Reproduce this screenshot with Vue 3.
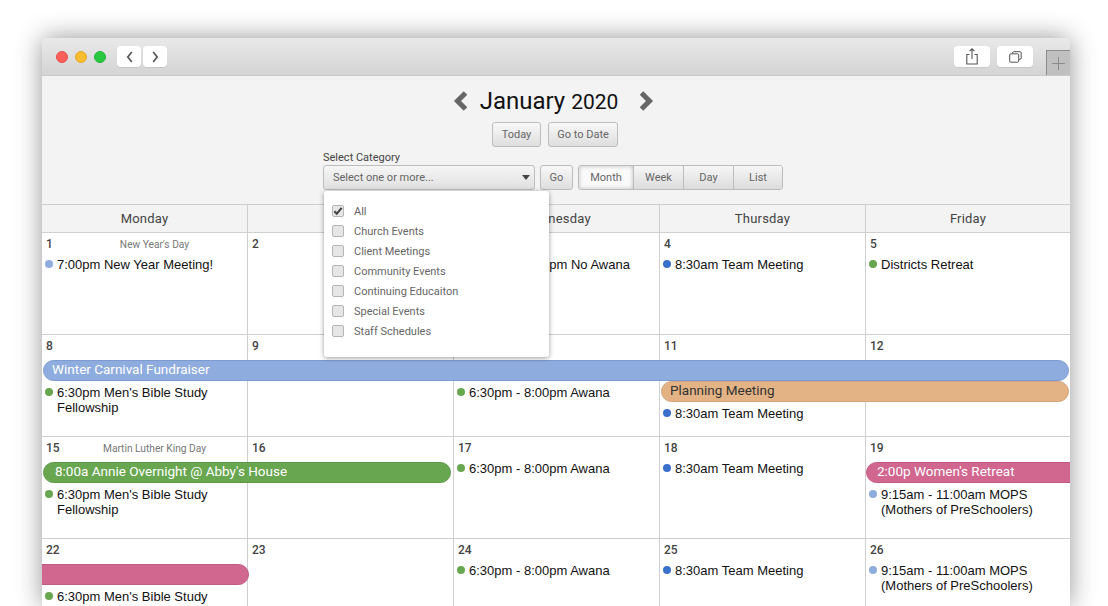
<script setup>
const days = ['Monday', 'Tuesday', 'Wednesday', 'Thursday', 'Friday']
const cats = ['All', 'Church Events', 'Client Meetings', 'Community Events', 'Continuing Educaiton', 'Special Events', 'Staff Schedules']
const views = ['Month', 'Week', 'Day', 'List']
const blue = '#8facde', green = '#68a74f', dark = '#3a6fcb'
const awana = { c: green, t: '6:30pm - 8:00pm Awana' }
const team = { c: dark, t: '8:30am Team Meeting' }
const mens = { c: green, t: '6:30pm Men\'s Bible Study Fellowship' }
const mops = { c: blue, t: '9:15am - 11:00am MOPS (Mothers of PreSchoolers)' }
const weeks = [
  { cls: 'w1', cells: [
    { n: 1, hol: "New Year's Day", ev: [{ c: blue, t: '7:00pm New Year Meeting!' }] },
    { n: 2, ev: [] },
    { n: 3, ev: [{ c: green, t: '6:30pm - 8:00pm No Awana' }] },
    { n: 4, ev: [team] },
    { n: 5, ev: [{ c: green, t: 'Districts Retreat' }] } ] },
  { cls: 'w2', cells: [
    { n: 8, ev: [mens], pad: 'p2' },
    { n: 9, ev: [], pad: 'p2' },
    { n: 10, ev: [awana], pad: 'p2' },
    { n: 11, ev: [team], pad: 'p3' },
    { n: 12, ev: [], pad: 'p2' } ] },
  { cls: 'w3', cells: [
    { n: 15, hol: 'Martin Luther King Day', ev: [mens], pad: 'p2' },
    { n: 16, ev: [], pad: 'p2' },
    { n: 17, ev: [awana] },
    { n: 18, ev: [team] },
    { n: 19, ev: [mops], pad: 'p2' } ] },
  { cls: 'w4', cells: [
    { n: 22, ev: [mens], pad: 'p2' },
    { n: 23, ev: [] },
    { n: 24, ev: [awana] },
    { n: 25, ev: [team] },
    { n: 26, ev: [mops] } ] },
]
const bars = {
  w2: [
    { k: 'b-blue b-wide', t: 'Winter Carnival Fundraiser' },
    { k: 'b-orange b-two', t: 'Planning Meeting' } ],
  w3: [
    { k: 'b-green b-left', t: '8:00a Annie Overnight @ Abby\'s House' },
    { k: 'b-pink b-fri', t: '2:00p Women\'s Retreat' } ],
  w4: [ { k: 'b-pink b-cont', t: '' } ],
}
</script>

<template>
  <div class="window">
    <header class="titlebar">
      <span class="light red"></span>
      <span class="light yellow"></span>
      <span class="light lime"></span>
      <div class="navpair">
        <span class="tb-btn small"><svg width="9" height="14" viewBox="0 0 9 14"><path d="M6.8 2 L2.8 7 L6.8 12" fill="none" stroke="#555" stroke-width="1.7"/></svg></span>
        <span class="tb-btn small"><svg width="9" height="14" viewBox="0 0 9 14"><path d="M2.2 2 L6.2 7 L2.2 12" fill="none" stroke="#555" stroke-width="1.7"/></svg></span>
      </div>
      <span class="grow"></span>
      <span class="tb-btn wide"><svg width="12" height="17" viewBox="0 0 12 17"><path d="M3.5 6.5 H0.8 V16 H11.2 V6.5 H8.5 M6 11 V1 M3.6 3.2 L6 .8 L8.4 3.2" fill="none" stroke="#555" stroke-width="1.1"/></svg></span>
      <span class="tb-btn wide second"><svg width="13" height="12" viewBox="0 0 13 12"><path d="M3.5 2.5 V1.8 Q3.5 .7 4.6 .7 H11 Q12.2 .7 12.2 1.8 V7.2 Q12.2 8.3 11 8.3 H10" fill="none" stroke="#555" stroke-width="1"/><rect x=".7" y="2.8" width="9" height="8.4" rx="1.2" fill="none" stroke="#555" stroke-width="1"/></svg></span>
      <span class="plus"><svg width="13" height="13" viewBox="0 0 13 13"><path d="M6.5 0 V13 M0 6.5 H13" stroke="#8b8b8b" stroke-width="1"/></svg></span>
    </header>

    <section class="toolbar">
      <div class="title-row">
        <svg width="16" height="20" viewBox="0 0 16 20"><path d="M12.5 2 L4.5 10 L12.5 18" fill="none" stroke="#666" stroke-width="5"/></svg>
        <h1 class="title">January <span class="year">2020</span></h1>
        <svg width="16" height="20" viewBox="0 0 16 20"><path d="M3.5 2 L11.5 10 L3.5 18" fill="none" stroke="#666" stroke-width="5"/></svg>
      </div>
      <div class="today-row">
        <button class="btn today">Today</button>
        <button class="btn goto">Go to Date</button>
      </div>
      <div class="filter">
        <label class="filter-label">Select Category</label>
        <div class="filter-row">
          <div class="select">
            <span>Select one or more...</span>
            <i class="caret"></i>
          </div>
          <button class="btn go">Go</button>
          <div class="segment">
            <span v-for="v in views" :key="v" class="seg" :class="{ active: v === 'Month' }">{{ v }}</span>
          </div>
        </div>
        <ul class="dropdown">
          <li v-for="(c, i) in cats" :key="c">
            <span class="check">
              <svg v-if="i === 0" width="11" height="10" viewBox="0 0 11 10"><path d="M1.5 5.2 L4.2 8 L9.5 1.5" fill="none" stroke="#444" stroke-width="2.3"/></svg>
            </span>
            <span>{{ c }}</span>
          </li>
        </ul>
      </div>
    </section>

    <div class="head">
      <div v-for="d in days" :key="d" class="head-cell">{{ d }}</div>
    </div>

    <div v-for="w in weeks" :key="w.cls" class="week">
      <div v-for="c in w.cells" :key="c.n" class="cell" :class="c.pad">
        <div class="cell-top">
          <b class="num">{{ c.n }}</b>
          <span v-if="c.hol" class="holiday">{{ c.hol }}</span>
        </div>
        <div v-for="e in c.ev" :key="e.t" class="event">
          <i class="dot" :style="{ background: e.c }"></i>
          <span>{{ e.t }}</span>
        </div>
      </div>
      <div v-for="b in bars[w.cls] || []" :key="b.k" class="bar" :class="b.k">{{ b.t }}</div>
    </div>
  </div>
</template>

<style>
html, body { margin: 0; background: #fff; overflow: hidden; height: 606px; }
</style>

<style scoped>
.window {
  width: 1028px;
  height: 568px;
  margin: 38px 0 0 42px;
  background: #f3f3f3;
  border-radius: 5px 5px 0 0;
  box-shadow: 0 0 26px rgba(0, 0, 0, .42);
  overflow: hidden;
  font-family: Roboto, "Liberation Sans", sans-serif;
  position: relative;
}
.titlebar {
  height: 38px;
  box-sizing: border-box;
  border-bottom: 1px solid #c8c8c8;
  background: linear-gradient(#e9e9e9, #d4d4d4);
  display: flex;
  align-items: center;
  padding-left: 14px;
  position: relative;
}
.light { width: 12px; height: 12px; border-radius: 50%; margin-right: 7px; box-sizing: border-box; }
.red { background: #fc5e5a; border: 1px solid #e5504c; }
.yellow { background: #fdbb30; border: 1px solid #e5a826; }
.lime { background: #2ac840; border: 1px solid #24b437; }
.navpair { display: flex; gap: 2px; margin-left: 4px; }
.tb-btn {
  background: #fff;
  border-radius: 4px;
  height: 21px;
  display: flex;
  align-items: center;
  justify-content: center;
  box-shadow: 0 1px 1px rgba(0, 0, 0, .08);
}
.small { width: 24px; }
.wide { width: 36px; }
.second { margin-left: 7px; margin-right: 37px; }
.grow { flex: 1; }
.plus {
  position: absolute;
  right: 0;
  top: 12px;
  width: 23px;
  height: 24px;
  background: #c0c0c0;
  border: 1px solid #8d8d8d;
  border-right: 0;
  border-bottom: 0;
  display: flex;
  align-items: center;
  justify-content: center;
}
.toolbar { height: 129px; box-sizing: border-box; border-bottom: 1px solid #cfcfcf; padding-top: 12px; }
.title-row { display: flex; justify-content: center; align-items: center; height: 26px; padding-right: 5px; }
.title { margin: 0 20px 0 11px; font-size: 24px; font-weight: 400; color: #111; line-height: 26px; }
.year { font-size: 21px; }
.today-row { display: flex; justify-content: center; gap: 7px; margin-top: 8px; padding-right: 2px; }
.btn {
  height: 25px;
  box-sizing: border-box;
  border: 1px solid #bdbdbd;
  border-radius: 3px;
  background: linear-gradient(#f8f8f8, #dedede);
  color: #666;
  font: 11px Roboto, sans-serif;
  padding: 0;
}
.today { width: 49px; }
.goto { width: 70px; }
.go { width: 33px; margin-left: 5px; }
.filter { position: relative; margin: 4px 0 0 281px; }
.filter-label { display: block; font-size: 11px; color: #444; line-height: 14px; }
.filter-row { display: flex; }
.select {
  width: 212px;
  height: 25px;
  box-sizing: border-box;
  border: 1px solid #bdbdbd;
  border-radius: 3px;
  background: linear-gradient(#f6f6f6, #e0e0e0);
  color: #666;
  font-size: 11px;
  padding-left: 9px;
  display: flex;
  align-items: center;
  position: relative;
}
.caret {
  position: absolute;
  right: 4px;
  top: 9px;
  border: 4px solid transparent;
  border-top: 5px solid #444;
  border-bottom: 0;
}
.segment {
  display: flex;
  margin-left: 5px;
  border: 1px solid #bdbdbd;
  border-radius: 3px;
  height: 25px;
  box-sizing: border-box;
  overflow: hidden;
}
.seg {
  width: 49px;
  border-left: 1px solid #bdbdbd;
  background: linear-gradient(#f6f6f6, #dcdcdc);
  color: #666;
  font-size: 11px;
  display: flex;
  align-items: center;
  justify-content: center;
}
.seg:last-child { width: 48px; }
.seg.active { width: 54px; border-left: 0; background: #fafafa; box-shadow: inset 0 0 4px rgba(0, 0, 0, .25); }
.dropdown {
  position: absolute;
  z-index: 5;
  left: 1px;
  top: 40px;
  width: 225px;
  height: 166px;
  box-sizing: border-box;
  margin: 0;
  padding: 10px 0 0 8px;
  list-style: none;
  background: #fff;
  border-radius: 3px;
  box-shadow: 0 1px 5px rgba(0, 0, 0, .4);
  font-size: 11px;
  color: #666;
}
.dropdown li { height: 20px; display: flex; align-items: center; gap: 10px; }
.check {
  width: 10px;
  height: 10px;
  border: 1px solid #b5b5b5;
  border-radius: 2px;
  background: #e6e6e6;
  display: flex;
  align-items: center;
  justify-content: center;
}
.head { display: grid; grid-template-columns: 206px 206px 206px 206px 204px; height: 28px; box-sizing: border-box; border-bottom: 1px solid #cfcfcf; background: #f3f3f3; }
.head-cell { border-right: 1px solid #cfcfcf; display: flex; align-items: center; justify-content: center; font-size: 13px; color: #444; letter-spacing: .2px; }
.head-cell:last-child { border-right: 0; }
.week {
  display: grid;
  grid-template-columns: 206px 206px 206px 206px 204px;
  height: 102px;
  box-sizing: border-box;
  background: #fff;
  position: relative;
}
.cell { border-right: 1px solid #cfcfcf; border-bottom: 1px solid #cfcfcf; padding: 3px 4px 0 3px; overflow: hidden; }
.cell:nth-child(5) { border-right: 0; }
.cell-top { display: flex; height: 16px; align-items: center; position: relative; }
.num { font-size: 12px; font-weight: 500; color: #444; padding-left: 1px; }
.holiday { position: absolute; left: 21px; right: 0; text-align: center; font-size: 10.2px; color: #777; }
.event { display: flex; font-family: "Liberation Sans", Arial, sans-serif; font-size: 13px; line-height: 15px; color: #111; margin-top: 5px; }
.p2 .event { margin-top: 31px; }
.p3 .event { margin-top: 52px; }
.dot { flex: none; width: 8px; height: 8px; border-radius: 50%; margin: 3px 4px 0 0; }
.bar {
  position: absolute;
  height: 21px;
  box-sizing: border-box;
  line-height: 17px;
  font-size: 13.5px;
  color: #fff;
  border-radius: 11px;
  padding-left: 8px;
  border: 1px solid transparent;
}
.b-blue { background: #8facde; border-color: #7d9bd0; }
.b-orange { background: #e3b386; border-color: #d3a377; color: #333; }
.b-green { background: #68a74f; border-color: #5c9845; }
.b-pink { background: #d1668f; border-color: #c25b83; }
.b-wide { left: 1px; right: 1px; top: 25px; }
.b-two { left: 619px; right: 1px; top: 46px; }
.b-left { left: 1px; width: 408px; top: 25px; padding-left: 11px; }
.b-fri { left: 824px; right: -20px; top: 25px; padding-left: 10px; }
.b-cont { left: -20px; width: 227px; top: 25px; }
</style>
